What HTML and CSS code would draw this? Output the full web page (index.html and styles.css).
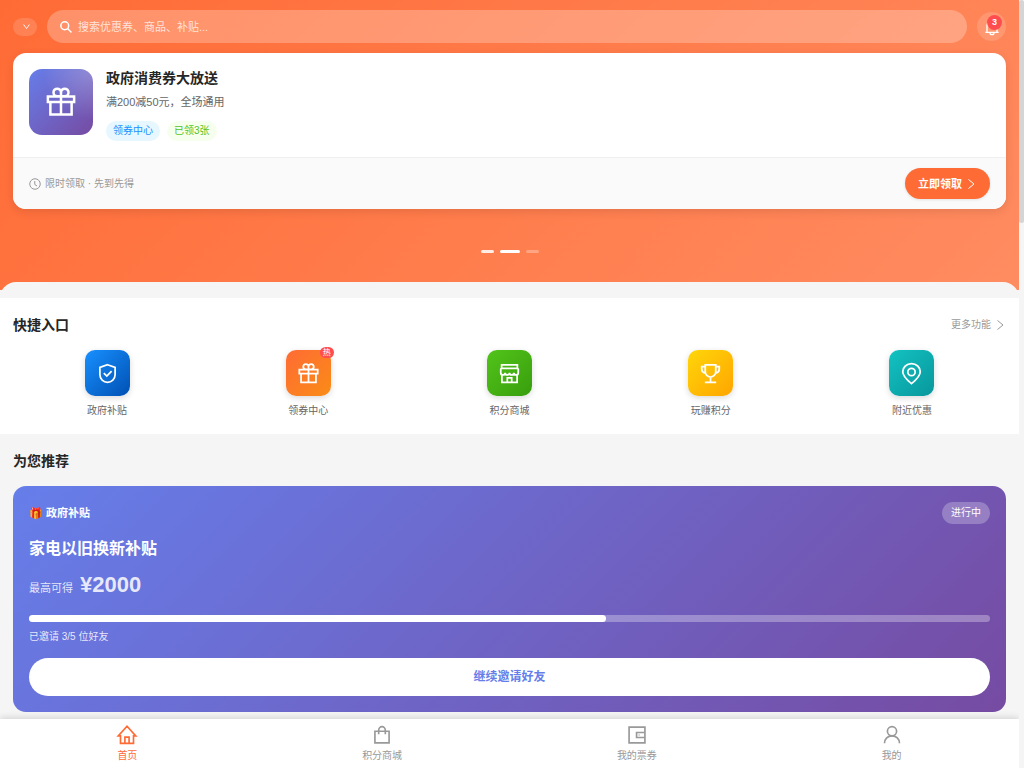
FILE: index.html
```html
<!DOCTYPE html>
<html lang="zh-CN">
<head>
<meta charset="utf-8">
<meta name="viewport" content="width=device-width, initial-scale=1">
<title>首页</title>
<link rel="stylesheet" href="styles.css">
</head>
<body>
<svg class="sprite" aria-hidden="true">
  <symbol id="gift" viewBox="0 0 24 24"><path d="M1.500 7.500h21v4.500h-21zM3.500 12h17v10h-17zM12 7.500V22M12 7.300H9a3 3 0 1 1 3-3zM12 7.300h3a3 3 0 1 0-3-3z"/></symbol>
  <symbol id="chevron" viewBox="0 0 24 24"><path d="M7 3l11 9-11 9"/></symbol>
</svg>
<main class="page">
  <header class="hero">
    <div class="topbar">
      <button class="city" type="button" aria-label="选择城市"><svg class="icon" viewBox="0 0 24 24"><path d="M2 5l10 14L22 5"/></svg></button>
      <label class="search">
        <svg class="icon" viewBox="0 0 24 24"><circle cx="9.500" cy="9.500" r="7.800"/><path d="M15 15l8 8"/></svg>
        <input type="search" placeholder="搜索优惠券、商品、补贴..." aria-label="搜索">
      </label>
      <button class="bell" type="button" aria-label="通知">
        <svg class="icon" viewBox="0 0 24 24"><path d="M2 20h20M4.500 20V10a7.500 7.500 0 0 1 15 0v10M12 2.500V1M9 20.500a3 3 0 0 0 6 0"/></svg>
        <span class="count">3</span>
      </button>
    </div>
    <article class="promo">
      <div class="promo-body">
        <div class="promo-pic"><svg class="icon"><use href="#gift"/></svg></div>
        <div class="promo-text">
          <h2>政府消费券大放送</h2>
          <p>满200减50元，全场通用</p>
          <div class="tags"><span class="tag blue">领券中心</span><span class="tag green">已领3张</span></div>
        </div>
      </div>
      <div class="promo-foot">
        <span class="limit"><svg class="icon" viewBox="0 0 24 24"><circle cx="12" cy="12" r="10.500"/><path d="M11.500 6v7l4.500 3"/></svg>限时领取 · 先到先得</span>
        <button class="claim" type="button">立即领取<svg class="icon"><use href="#chevron"/></svg></button>
      </div>
    </article>
    <div class="dots"><i class="near"></i><i class="on"></i><i></i></div>
  </header>
  <section class="quick">
    <div class="section-head"><h2>快捷入口</h2><a href="#more">更多功能<svg class="icon"><use href="#chevron"/></svg></a></div>
    <nav class="entries" aria-label="快捷入口">
      <a href="#subsidy"><span class="tile t-blue"><svg class="icon" viewBox="0 0 24 24"><path d="M12 2l8.700 3v8.500c0 4.500-4 8.500-8.700 8.500s-8.700-4-8.700-8.500V5zM7.800 11.700l3.400 3.300 5.500-5.800"/></svg></span>政府补贴</a>
      <a href="#coupon"><span class="tile t-orange"><svg class="icon"><use href="#gift"/></svg><b class="hot">热</b></span>领券中心</a>
      <a href="#mall"><span class="tile t-green"><svg class="icon" viewBox="0 0 24 24"><path d="M3 2h18v4H3zM3 6L2 7v4c0 3.500 5 3.500 5 0 0 3.500 5 3.500 5 0 0 3.500 5 3.500 5 0 0 3.500 5 3.500 5 0V7l-1-1M3.300 13.500V22h17.400v-8.500M9.500 22v-5h5v5"/></svg></span>积分商城</a>
      <a href="#play"><span class="tile t-yellow"><svg class="icon" viewBox="0 0 24 24"><path d="M6 2h12v8a6 6 0 0 1-12 0zM6 4H2v3c0 3 2 4 4 4.500M18 4h4v3c0 3-2 4-4 4.500M12 16v6M5.500 22h13"/></svg></span>玩赚积分</a>
      <a href="#near"><span class="tile t-teal"><svg class="icon" viewBox="0 0 24 24"><path d="M12 23.500C7 19.500 2 15 2 10a10 9.300 0 0 1 20 0c0 5-5 9.500-10 13.500z"/><circle cx="12" cy="10.300" r="4.200"/></svg></span>附近优惠</a>
    </nav>
  </section>
  <section class="recommend">
    <h2>为您推荐</h2>
    <article class="offer">
      <div class="offer-head"><strong>🎁 政府补贴</strong><span class="status">进行中</span></div>
      <h3>家电以旧换新补贴</h3>
      <p class="amount">最高可得<b>¥2000</b></p>
      <div class="bar" role="progressbar" aria-label="邀请进度" aria-valuemin="0" aria-valuemax="5" aria-valuenow="3"><div class="fill" style="width:60%"></div></div>
      <p class="invited">已邀请 3/5 位好友</p>
      <button class="invite" type="button">继续邀请好友</button>
    </article>
  </section>
</main>
<nav class="tabs" aria-label="主导航">
  <a class="active" href="#home"><svg class="icon" viewBox="0 0 24 24"><path d="M4.200 13v9h15.600v-9h2.700L12 1.500 1.500 13zM9.500 22v-7.500h5V22"/></svg>首页</a>
  <a href="#shop"><svg class="icon" viewBox="0 0 24 24"><path d="M3.500 7.500h17V21.500h-17zM8 11V6.500a4 4.500 0 0 1 8 0V11"/></svg>积分商城</a>
  <a href="#wallet"><svg class="icon" viewBox="0 0 24 24"><path d="M2.500 2.500h19v19h-19zM21.500 9h-10v6h10M14 12h1"/></svg>我的票券</a>
  <a href="#me"><svg class="icon" viewBox="0 0 24 24"><circle cx="12" cy="7.500" r="5.500"/><path d="M3 22c0-5.500 4-9 9-9s9 3.500 9 9"/></svg>我的</a>
</nav>
<div class="scrollbar" aria-hidden="true"><div class="thumb"></div></div>
</body>
</html>
```

FILE: styles.css
```css
* { box-sizing: border-box; }
body {
  margin: 0;
  padding-right: 5px;
  min-height: 100vh;
  display: flex;
  flex-direction: column;
  background: #f5f5f5;
  color: #262626;
  font-family: "Liberation Sans", "Noto Sans CJK SC", sans-serif;
  font-size: 11px;
  line-height: 16px;
}
h2, h3, p { margin: 0; }
h2 { font-size: 14px; line-height: 20px; }
a { color: inherit; text-decoration: none; }
button, input { font: inherit; color: inherit; border: 0; padding: 0; }
.sprite { display: none; }
.icon { width: 12px; height: 12px; flex: none; overflow: visible; fill: none; stroke: currentColor; stroke-width: 2; }

.hero {
  padding: 10px 13px 0;
  height: 290px;
  display: flex;
  flex-direction: column;
  background: linear-gradient(135deg, #ff6b35, #ff8c61);
  overflow: hidden;
}
.hero::after {
  content: "";
  height: 16px;
  flex: none;
  margin: auto -13px -8px;
  border-radius: 16px 16px 0 0;
  background: #f5f5f5;
}
.topbar { display: flex; align-items: center; gap: 10px; margin-bottom: 10px; color: #fff; }
.city { width: 24px; height: 18px; padding-left: 10px; border-radius: 9px; background: rgba(255,255,255,.15); display: flex; align-items: center; }
.city .icon { width: 7px; height: 7px; stroke-width: 3; }
.search { flex: 1; height: 33px; padding: 0 13px; display: flex; align-items: center; gap: 6px; border-radius: 17px; background: rgba(255,255,255,.25); }
.search .icon { stroke-width: 3; }
.search input { flex: 1; min-width: 0; background: none; outline: 0; }
.search input::placeholder { color: rgba(255,255,255,.75); opacity: 1; }
.bell { position: relative; width: 29px; height: 29px; border-radius: 50%; background: rgba(255,255,255,.15); display: flex; align-items: center; justify-content: center; }
.bell .icon { width: 16px; height: 16px; }
.count { position: absolute; top: 3px; right: 4px; width: 15px; height: 15px; border-radius: 8px; background: #ff4d4f; font-size: 9px; font-weight: bold; line-height: 15px; text-align: center; }

.promo { flex: none; border-radius: 13px; background: #fff; overflow: hidden; box-shadow: 0 3px 10px rgba(0,0,0,.1); }
.promo-body { display: flex; gap: 13px; padding: 16px; }
.promo-pic { width: 64px; height: 66px; border-radius: 13px; display: flex; align-items: center; justify-content: center; color: #fff; background: radial-gradient(circle at 100% 0, rgba(255,255,255,.25), transparent 55%), linear-gradient(135deg, #667eea, #764ba2); }
.promo-pic .icon { width: 30px; height: 30px; }
.promo-text h2 { line-height: 18px; }
.promo-text p { margin: 7px 0 11px; color: #666; }
.tags { display: flex; gap: 7px; }
.tag { padding: 2px 7px; border-radius: 10px; font-size: 10px; }
.blue { color: #1890ff; background: #e6f7ff; }
.green { color: #52c41a; background: #f6ffed; }
.promo-foot { display: flex; align-items: center; justify-content: space-between; padding: 10px 16px; border-top: 1px solid #f0f0f0; background: #fafafa; }
.limit { display: flex; align-items: center; gap: 4px; font-size: 10px; color: #999; }
.claim { height: 31px; padding: 0 13px; border-radius: 16px; display: flex; align-items: center; gap: 3px; background: #ff6b35; color: #fff; font-weight: bold; box-shadow: 0 1px 3px rgba(0,0,0,.1); }
.dots { display: flex; justify-content: center; gap: 6px; margin-top: 41px; }
.dots i { width: 13px; height: 3px; border-radius: 2px; background: rgba(255,255,255,.3); }
.dots .near { background: rgba(255,255,255,.85); }
.dots .on { width: 20px; background: #fff; }

.quick { margin-top: 8px; padding: 17px 13px 15px; background: #fff; }
.section-head { display: flex; align-items: center; justify-content: space-between; margin-bottom: 15px; }
.section-head a { display: flex; align-items: center; gap: 3px; font-size: 10px; color: #999; }
.entries { display: grid; grid-template-columns: repeat(5, 1fr); gap: 13px; }
.entries a { display: flex; flex-direction: column; align-items: center; gap: 7px; font-size: 10px; color: #666; }
.tile { position: relative; width: 45px; height: 46px; border-radius: 10px; color: #fff; display: flex; align-items: center; justify-content: center; box-shadow: 0 2px 6px rgba(0,0,0,.15); }
.tile .icon { width: 21px; height: 21px; }
.hot { position: absolute; top: -3px; right: -3px; padding: 0 3px; border-radius: 6px; background: #ff4d4f; font-size: 8px; line-height: 11px; font-weight: normal; }
.t-blue { background: linear-gradient(135deg, #1890ff, #0050b3); }
.t-orange { background: linear-gradient(135deg, #ff6b35, #fa8c16); }
.t-green { background: linear-gradient(135deg, #52c41a, #389e0d); }
.t-yellow { background: linear-gradient(135deg, #ffd60a, #ffa500); }
.t-teal { background: linear-gradient(135deg, #13c2c2, #08979c); }

.recommend { padding: 17px 13px 6px; }
.offer { margin-top: 15px; padding: 16px; border-radius: 13px; color: #fff; background: linear-gradient(135deg, #667eea, #764ba2); }
.offer-head { display: flex; align-items: center; justify-content: space-between; }
.status { padding: 3px 9px; border-radius: 11px; background: rgba(255,255,255,.25); font-size: 10px; }
.offer h3 { margin-top: 13px; font-size: 16px; line-height: 24px; }
.amount { display: flex; align-items: baseline; gap: 7px; margin-top: 11px; line-height: 26px; color: rgba(255,255,255,.85); }
.amount b { font-size: 22px; }
.bar { height: 7px; margin-top: 14px; border-radius: 4px; background: rgba(255,255,255,.3); }
.fill { height: 7px; border-radius: 4px; background: #fff; }
.invited { margin-top: 7px; font-size: 10px; color: rgba(255,255,255,.85); }
.invite { width: 100%; height: 38px; margin-top: 13px; border-radius: 19px; background: #fff; color: #667eea; font-size: 12px; font-weight: bold; }

.tabs { position: sticky; bottom: 0; margin-top: auto; height: 49px; display: grid; grid-template-columns: repeat(4, 1fr); background: #fff; box-shadow: 0 -2px 6px rgba(0,0,0,.12); }
.tabs a { display: flex; flex-direction: column; align-items: center; padding-top: 6px; gap: 3px; font-size: 10px; color: #999; }
.tabs .icon { width: 20px; height: 20px; }
.tabs .active { color: #ff6b35; }
.scrollbar { position: fixed; top: 0; right: 0; bottom: 0; width: 5px; background: #f5f5f5; }
.thumb { height: 29%; border-radius: 3px; background: #d5d5d5; }
```
